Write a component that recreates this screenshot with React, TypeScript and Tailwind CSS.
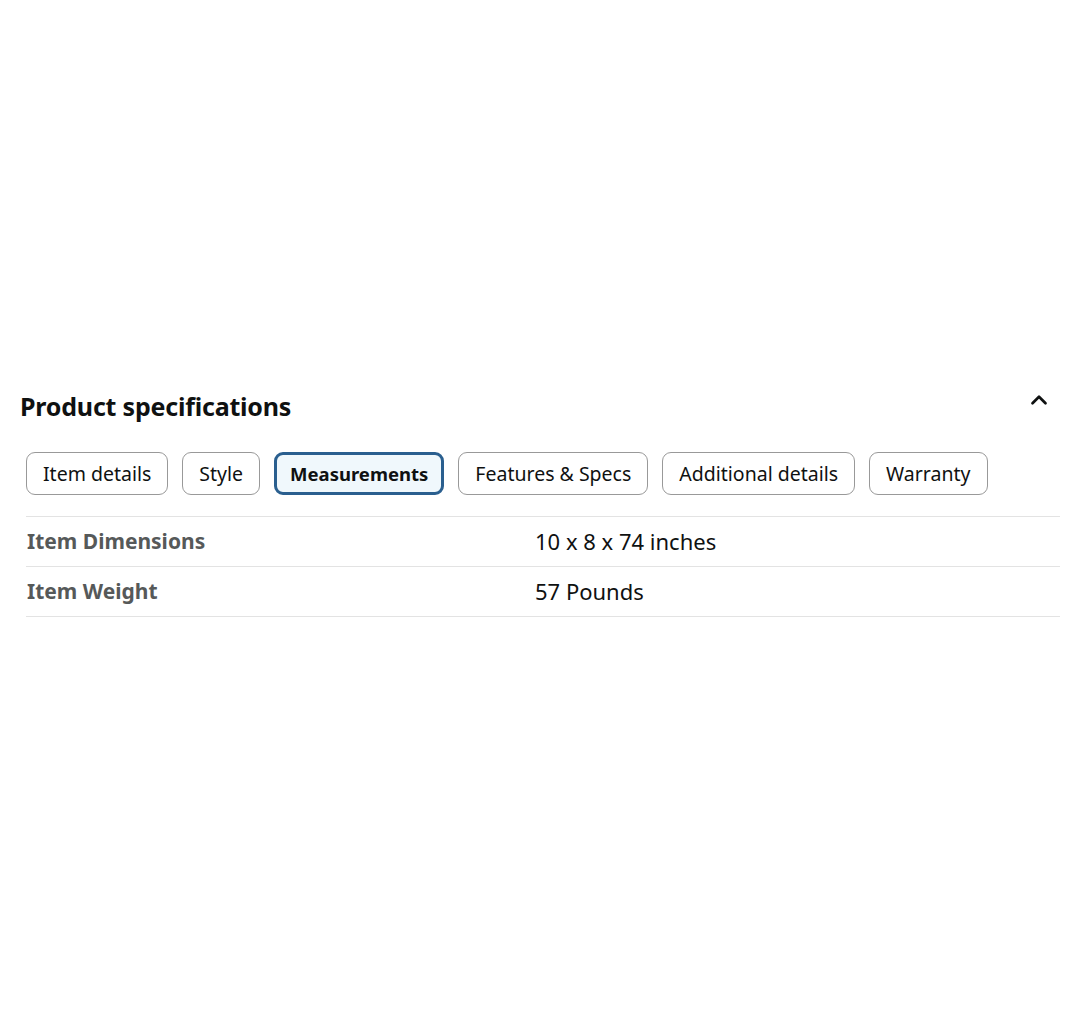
import { ChevronUp } from 'lucide-react';

const tabs = ['Item details', 'Style', 'Measurements', 'Features & Specs', 'Additional details', 'Warranty'];
const activeTab = 'Measurements';

const rows = [
  { label: 'Item Dimensions', value: '10 x 8 x 74 inches' },
  { label: 'Item Weight', value: '57 Pounds' },
];

export default function App() {
  return (
    <div
      className="w-[1080px] h-[1015px] bg-white pt-[390px]"
      style={{ fontFamily: '"Noto Sans", "Open Sans", Arial, sans-serif' }}
    >
      <div className="pl-[20px] pr-[20px]">
        <div className="flex items-center justify-between h-[32px]">
          <h2 className="text-[25px] leading-[32px] font-bold text-[#0f1111] tracking-[-0.2px]">Product specifications</h2>
          <ChevronUp className="w-[26px] h-[26px] text-[#0f1111] mr-[8px] -mt-[12px]" strokeWidth={2.5} />
        </div>

        <div className="flex gap-[14px] mt-[30px] pl-[6px]">
          {tabs.map((tab) => {
            const active = tab === activeTab;
            return (
              <button
                key={tab}
                className={
                  active
                    ? 'h-[43px] px-[13px] rounded-[9px] border-[3px] border-[#2a5f8f] bg-[#f0f8fc] text-[18.5px] font-bold text-[#0f1111]'
                    : 'h-[43px] px-[16px] rounded-[9px] border border-[#999999] bg-white text-[19.5px] text-[#0f1111]'
                }
              >
                {tab}
              </button>
            );
          })}
        </div>

        <div className="mt-[21px] ml-[6px] border-t border-[#e3e3e3]">
          {rows.map((row) => (
            <div key={row.label} className="flex items-center h-[50px] border-b border-[#e3e3e3]">
              <div className="w-[509px] pl-[1px] text-[21px] font-bold text-[#565959]">{row.label}</div>
              <div className="text-[22px] text-[#0f1111]">{row.value}</div>
            </div>
          ))}
        </div>
      </div>
    </div>
  );
}
